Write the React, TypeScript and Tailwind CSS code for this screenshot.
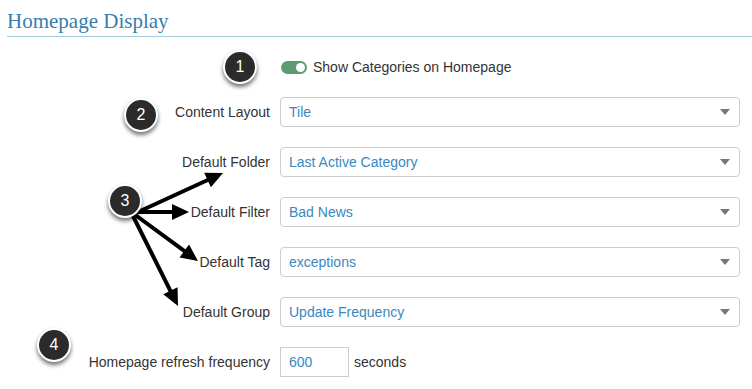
import React from 'react';

const labelCls = "w-[280px] shrink-0 pr-[10px] text-right text-[14px] text-[#333]";

function Caret() {
    return (
        <svg width="10" height="6" viewBox="0 0 10 6" className="shrink-0">
            <path d="M0 0h10L5 6z" fill="#777" />
        </svg>
    );
}

function SelectRow({ label, value }: { label: string; value: string }) {
    return (
        <div className="flex items-center h-[30px] mt-[20px]">
            <div className={labelCls}>{label}</div>
            <div className="flex items-center justify-between w-[460px] h-[30px] px-[8px] pr-[9px] border border-[#ccc] rounded-[4px] bg-white">
                <span className="text-[14px] text-[#3b88bd]">{value}</span>
                <Caret />
            </div>
        </div>
    );
}

function Badge({ n, className }: { n: number; className: string }) {
    return (
        <div
            className={
                "absolute w-[34px] h-[34px] rounded-full bg-[#2b2b2b] border-2 border-white shadow-[0_3px_4px_rgba(0,0,0,0.55)] flex items-center justify-center text-white text-[16px] " +
                className
            }
        >
            {n}
        </div>
    );
}

// annotation arrows drawn over the form
function Arrows() {
    const lines = [
        { x1: 138, y1: 212, x2: 223, y2: 173 },
        { x1: 138, y1: 212, x2: 189, y2: 212 },
        { x1: 134, y1: 214, x2: 198, y2: 261 },
        { x1: 132, y1: 214, x2: 178, y2: 306 },
    ];
    return (
        <svg className="absolute left-0 top-0 pointer-events-none" width="752" height="389">
            {lines.map((l, i) => {
                const a = Math.atan2(l.y2 - l.y1, l.x2 - l.x1);
                const len = 17, half = 8;
                const bx = l.x2 - len * Math.cos(a), by = l.y2 - len * Math.sin(a);
                const px = -Math.sin(a) * half, py = Math.cos(a) * half;
                return (
                    <g key={i}>
                        <line x1={l.x1} y1={l.y1} x2={bx + 2 * Math.cos(a)} y2={by + 2 * Math.sin(a)} stroke="#000" strokeWidth="4" strokeLinecap="round" />
                        <polygon points={`${l.x2},${l.y2} ${bx + px},${by + py} ${bx - px},${by - py}`} fill="#000" />
                    </g>
                );
            })}
        </svg>
    );
}

export default function App() {
    return (
        <div className="relative w-[752px] h-[389px] bg-white overflow-hidden" style={{ fontFamily: '"Liberation Sans", Arial, sans-serif' }}>
            {/* Heading */}
            <div className="ml-[7px] pt-[9px] h-[37px] border-b border-[#a3cbdb]">
                <h2 className="text-[21px] leading-[24px] text-[#367eac]" style={{ fontFamily: '"Liberation Serif", "DejaVu Serif", serif' }}>
                    Homepage Display
                </h2>
            </div>

            {/* Form */}
            <div className="flex flex-col">
                <div className="flex items-center h-[20px] mt-[20px]">
                    <div className={labelCls}></div>
                    <div className="flex items-center ml-[1px]">
                        <div className="w-[26px] h-[13px] rounded-full bg-[#5a9c70] flex items-center justify-end pr-[2px]">
                            <div className="w-[9px] h-[9px] rounded-full bg-white" />
                        </div>
                        <span className="ml-[6px] text-[14px] text-[#333]">Show Categories on Homepage</span>
                    </div>
                </div>

                <SelectRow label="Content Layout" value="Tile" />
                <SelectRow label="Default Folder" value="Last Active Category" />
                <SelectRow label="Default Filter" value="Bad News" />
                <SelectRow label="Default Tag" value="exceptions" />
                <SelectRow label="Default Group" value="Update Frequency" />

                <div className="flex items-center h-[30px] mt-[20px]">
                    <div className={labelCls}>Homepage refresh frequency</div>
                    <div className="w-[69px] h-[30px] border border-[#ccc] px-[8px] flex items-center text-[14px] text-[#3b88bd]">600</div>
                    <span className="ml-[5px] text-[14px] text-[#333]">seconds</span>
                </div>
            </div>

            <Arrows />
            <Badge n={1} className="left-[223px] top-[50px]" />
            <Badge n={2} className="left-[124px] top-[98px]" />
            <Badge n={3} className="left-[108px] top-[184px]" />
            <Badge n={4} className="left-[37px] top-[328px]" />
        </div>
    );
}
